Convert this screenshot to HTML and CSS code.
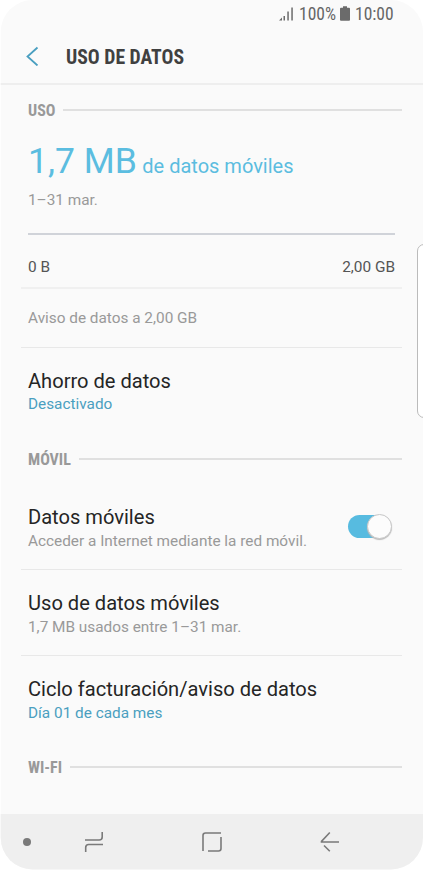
FILE: index.html
```html
<!DOCTYPE html>
<html lang="es">
<head>
<meta charset="utf-8">
<title>Uso de datos</title>
<link rel="stylesheet" href="styles.css">
</head>
<body>
<div class="phone">
  <div class="status">
    <svg class="signal" width="15" height="15" viewBox="0 0 15 15"><path d="M0 14.5L3 11.5V14.5ZM4.5 10H6V14.5H4.5ZM8.3 5.5H9.8V14.5H8.3ZM12.3 1.5H13.8V14.5H12.3Z"/></svg>
    <span class="percent"><span class="narrow">100%</span></span>
    <svg class="battery" width="10" height="15" viewBox="0 0 10 15"><path d="M3 0.3H7V1.8H9Q10 1.8 10 2.8V14Q10 14.8 9 14.8H1Q0 14.8 0 14V2.8Q0 1.8 1 1.8H3Z"/></svg>
    <span class="clock"><span class="narrow">10:00</span></span>
  </div>
  <header class="header">
    <svg class="back" width="13" height="20" viewBox="0 0 13 20"><path d="M11.5 1.500L1.500 10.500L11.500 19.500"/></svg>
    <h1 class="narrow">USO DE DATOS</h1>
  </header>
  <main class="content">
    <div class="section first"><h2 class="uso"><span class="narrow">USO</span></h2><i></i></div>
    <section class="usage">
      <p class="total"><span class="amount">1,7 MB</span><span class="unit">de datos móviles</span></p>
      <p class="period">1–31 mar.</p>
      <div class="bar"></div>
      <div class="scale"><span>0 B</span><span>2,00 GB</span></div>
    </section>
    <div class="notice"><span>Aviso de datos a 2,00 GB</span></div>
    <div class="item saver"><h3>Ahorro de datos</h3><p class="blue">Desactivado</p></div>
    <div class="section middle"><h2 class="movil"><span class="narrow">MÓVIL</span></h2><i></i></div>
    <div class="item mobile"><h3>Datos móviles</h3><p>Acceder a Internet mediante la red móvil.</p><div class="switch"><b></b></div></div>
    <div class="item used"><h3>Uso de datos móviles</h3><p>1,7 MB usados entre 1–31 mar.</p></div>
    <div class="item cycle"><h3>Ciclo facturación/aviso de datos</h3><p class="blue">Día 01 de cada mes</p></div>
    <div class="section"><h2 class="wifi"><span class="narrow">WI-FI</span></h2><i></i></div>
  </main>
  <nav class="nav">
    <span class="dot"></span>
    <svg width="20" height="22" viewBox="0 0 20 22"><path d="M18.2 1V6Q18.2 9 15.2 9H1M1.7 21V16.500Q1.700 13.500 4.700 13.500H19"/></svg>
    <svg width="20" height="20" viewBox="0 0 20 20"><path d="M1 19V3.500Q1 1 3.500 1H19M19 5V16.500Q19 19 16.500 19H6"/></svg>
    <svg width="20" height="22" viewBox="0 0 20 22"><path d="M9.800 1.500L1.500 10.400V11H19M4 14.500L9.800 20.300"/></svg>
  </nav>
  <div class="edge"></div>
</div>
</body>
</html>
```
FILE: styles.css
```css
* { box-sizing: border-box; }
body { margin: 0; background: #fff; font-family: Roboto, "Liberation Sans", sans-serif; }
h1, h2, h3, p { margin: 0; font-weight: 400; }
svg { flex: none; display: block; }
.phone { position: relative; width: 423px; height: 870px; background: #fafafa; clip-path: inset(0 0 0.5px 0.7px round 32px); overflow: hidden; }
.narrow { display: inline-block; font-family: "Roboto Condensed", Roboto, sans-serif; font-stretch: 75%; white-space: nowrap; }
.status { display: flex; height: 28px; padding: 6px 0 0 279px; color: #666; font-size: 17.5px; line-height: 17px; }
.status svg { fill: #6b6b6b; }
.percent { width: 36px; margin-left: 5px; }
.battery { margin-left: 5px; }
.clock { margin-left: 5px; }
.header { display: flex; align-items: center; height: 57px; padding-left: 26px; border-bottom: 2px solid #eee; }
.back { fill: none; stroke: #4a9fc0; stroke-width: 1.8; }
.header h1 { margin-left: 27px; padding-top: 4px; font-size: 19.7px; font-weight: 700; line-height: 24px; color: #404040; }
.section { display: flex; align-items: center; height: 52px; padding: 0 21px 0 28px; }
.section h2 { padding-top: 2px; color: #999; font-size: 16px; line-height: 20px; }
.section h2 .narrow { font-weight: 700; }
.section i { flex: 1; height: 2px; background: #e0e0e0; }
.section.first { height: 50px; }
.section.middle { height: 51px; }
.uso { width: 35px; }
.movil { width: 51px; }
.wifi { width: 42px; }
.usage { height: 154px; margin: 0 21px; padding: 2px 7px 0; border-bottom: 2px solid #f0f0f0; }
.total { display: flex; align-items: baseline; height: 48px; line-height: 48px; color: #5bbde0; }
.amount { font-size: 35.5px; }
.unit { margin-left: 5.5px; font-size: 20px; }
.period { margin-top: 5px; font-size: 15.35px; line-height: 20px; color: #999; }
.bar { height: 2px; margin-top: 23px; background: #d0d3d9; }
.scale { display: flex; justify-content: space-between; margin-top: 22px; font-size: 15.4px; line-height: 20px; color: #555; }
.notice { display: flex; align-items: center; height: 59px; margin: 0 21px; padding: 0 0 1px 7px; border-bottom: 1px solid #e8e8e8; font-size: 15.35px; color: #999; }
.item { position: relative; margin: 0 21px; padding: 20px 0 0 7px; }
.item h3 { font-size: 20.1px; line-height: 26px; color: #252525; white-space: nowrap; }
.item p { margin-top: 1px; font-size: 15.35px; line-height: 20px; color: #999; white-space: nowrap; }
.item .blue { color: #4a9fc0; }
.saver { height: 85px; }
.saver p { margin-top: 0; }
.mobile { height: 86px; border-bottom: 1px solid #e8e8e8; }
.used { height: 86px; border-bottom: 1px solid #e8e8e8; }
.cycle { height: 85px; }
.switch { position: absolute; right: 11px; top: 31px; width: 43px; height: 23px; background: #57bbe0; border-radius: 12px; }
.switch b { position: absolute; right: -1px; top: -1px; width: 25px; height: 25px; border-radius: 50%; background: #fcfcfc; border: 1px solid #c8c8c8; box-shadow: 0 1px 1px #bbb; }
.nav { position: absolute; left: 0; right: 0; bottom: 0; height: 56px; display: flex; align-items: center; padding: 0 0 0 23px; background: #efefef; }
.nav svg { fill: none; stroke: #7a7a7a; stroke-width: 1.6; }
.dot { width: 8px; height: 8px; border-radius: 50%; background: #7a7a7a; margin-right: 53px; }
.nav svg + svg { margin-left: 98px; }
.edge { position: absolute; left: 417px; top: 244px; width: 14px; height: 174px; background: #fff; border: 1px solid #bbb; border-radius: 7px; }
```
